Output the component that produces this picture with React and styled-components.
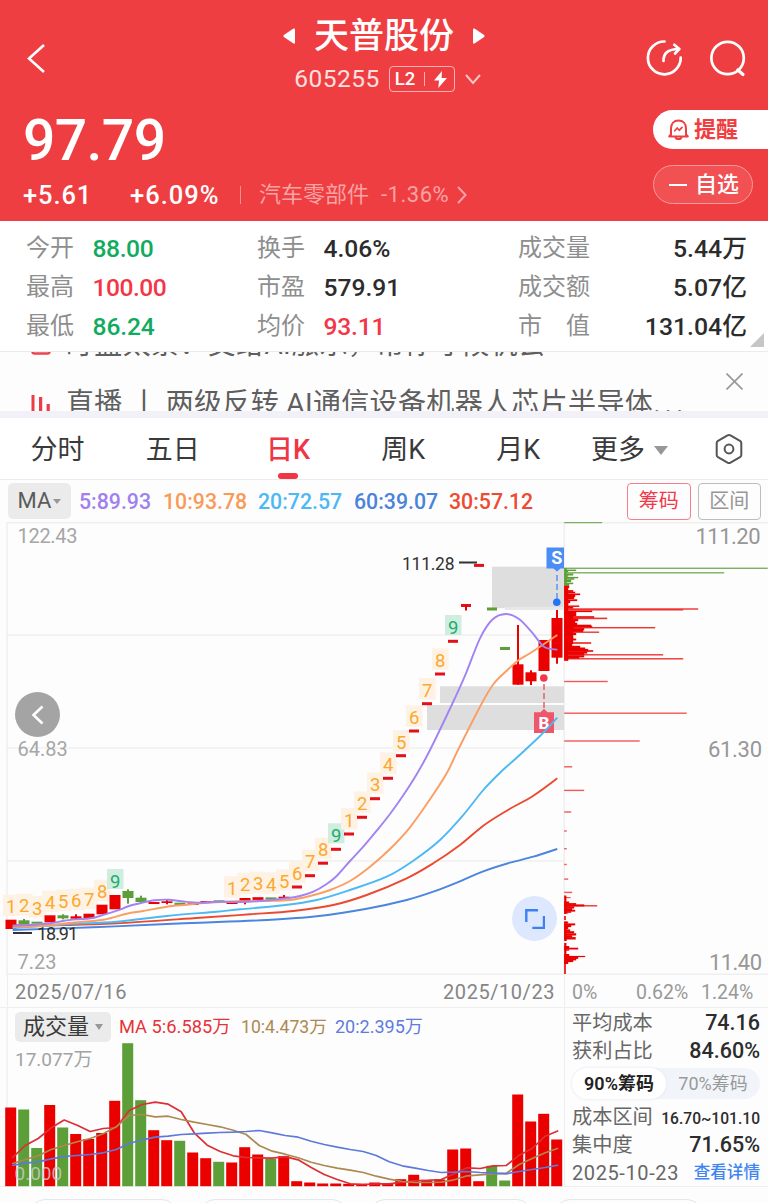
import React from "react";
import styled, { createGlobalStyle } from "styled-components";

const RED = "#ef3e41";
const UP = "#eb0000";
const DOWN = "#5c9e38";

const GlobalStyle = createGlobalStyle`
  * {
    box-sizing: border-box;
  }

  body {
    margin: 0;
    background: #fdfdfd;
    font-family: Roboto, "Noto Sans CJK SC", sans-serif;
  }

  svg {
    display: block;
  }
`;

const Container = styled.div`
  display: flex;
  flex-direction: column;
  width: 768px;
  height: 1203px;
  overflow: hidden;
  background: #fdfdfd;

  & > * {
    flex-shrink: 0;
  }
`;

/* ---------- header ---------- */

const Header = styled.header`
  height: 220.5px;
  background: ${RED};
  color: #fff;
`;

const TopBar = styled.div`
  display: grid;
  grid-template-columns: 130px 1fr 130px;
  height: 104px;
  padding-top: 12px;
`;

const BackSlot = styled.div`
  padding: 31px 0 0 26px;
`;

const TitleBlock = styled.div`
  display: flex;
  flex-direction: column;
  align-items: center;
`;

const TitleRow = styled.div`
  display: flex;
  align-items: center;
  gap: 19px;
  height: 48px;
`;

const StockName = styled.h1`
  margin: 0;
  padding-top: 2px;
  font-size: 35px;
  font-weight: 500;
  line-height: 48px;
`;

const CodeRow = styled.div`
  display: flex;
  align-items: center;
  height: 38px;
  padding-left: 7px;
  color: #fde0e0;
`;

const Code = styled.span`
  font-size: 24.5px;
  letter-spacing: 0.45px;
  line-height: 28px;
`;

const LevelBadge = styled.div`
  display: flex;
  align-items: center;
  justify-content: space-between;
  width: 66px;
  height: 26px;
  margin: 0 10px 0 9px;
  padding: 0 7px 0 5px;
  border: 1.5px solid #f9b3b4;
  border-radius: 4px;
  color: #fff;
  font-size: 18.5px;
  font-weight: 500;
`;

const BadgeSplit = styled.i`
  width: 1px;
  height: 14px;
  background: #f9b3b4;
`;

const IconGroup = styled.div`
  display: flex;
  gap: 24px;
  padding: 26px 0 0 6px;
`;

const QuoteBar = styled.div`
  display: flex;
  justify-content: space-between;
`;

const QuoteInfo = styled.div`
  display: flex;
  flex-direction: column;
  padding-left: 23px;
`;

const Price = styled.div`
  height: 73px;
  font-size: 57px;
  font-weight: 500;
  line-height: 73px;
  letter-spacing: -0.6px;
`;

const ChangeRow = styled.div`
  display: flex;
  align-items: center;
  height: 36px;
  font-size: 25.5px;
  font-weight: 500;
`;

const Change = styled.span`
  width: ${(p) => p.$w}px;
  letter-spacing: ${(p) => p.$ls || 0}px;
  white-space: nowrap;
`;

const Sector = styled.div`
  display: flex;
  align-items: center;
  gap: 12px;
  margin-left: 4px;
  padding-left: 18px;
  color: #f9a3a4;
  font-size: 22px;
  font-weight: 400;
  line-height: 18px;
  border-left: 1.5px solid #f58f91;

  svg {
    margin-left: -4px;
  }
`;

const SectorChange = styled.span`
  letter-spacing: 0.5px;
`;

const PillColumn = styled.div`
  display: flex;
  flex-direction: column;
  gap: 16px;
  width: 115px;
  padding-top: 6px;
`;

const RemindPill = styled.div`
  display: flex;
  align-items: center;
  gap: 5px;
  height: 39px;
  padding-left: 15px;
  border-radius: 20px 0 0 20px;
  background: #fff;
  color: ${RED};
  font-size: 22px;
  font-weight: 700;
`;

const WatchPill = styled.div`
  display: flex;
  align-items: center;
  gap: 8px;
  width: 100px;
  height: 39px;
  padding-left: 15px;
  border: 1.5px solid #f79a9b;
  border-radius: 20px;
  background: #f15153;
  font-size: 22px;
  font-weight: 500;
`;

const PillText = styled.span`
  padding-bottom: 5px;
`;

const Minus = styled.i`
  width: 18px;
  height: 2px;
  background: #fff;
`;

/* ---------- stats ---------- */

const Stats = styled.section`
  display: grid;
  grid-template-columns: 231px 261px 1fr;
  grid-auto-rows: 39px;
  position: relative;
  height: 131px;
  padding: 8px 21px 0 26px;
  border-bottom: 1px solid #ebebeb;
  background: #fff;
`;

const Stat = styled.div`
  display: flex;
  align-items: center;
  justify-content: ${(p) => (p.$spread ? "space-between" : "flex-start")};
`;

const StatLabel = styled.span`
  width: ${(p) => (p.$spread ? "auto" : "66.5px")};
  color: #8e8e8e;
  font-size: 24px;
  line-height: 39px;
  white-space: pre;
`;

const StatValue = styled.span`
  padding-top: ${(p) => (p.$spread ? 0 : 1)}px;
  color: ${(p) => p.$color || "#2c2c2c"};
  font-size: ${(p) => (p.$spread ? 24.8 : 24.6)}px;
  font-weight: 500;
  letter-spacing: ${(p) => p.$ls || 0}px;
  line-height: 39px;
`;

const Corner = styled.i`
  position: absolute;
  right: 4px;
  bottom: 4px;
  border-bottom: 14px solid #c6c6c6;
  border-left: 14px solid transparent;
`;

/* ---------- ticker ---------- */

const Ticker = styled.section`
  display: flex;
  justify-content: space-between;
  height: 59.5px;
  overflow: hidden;
`;

const TickerLines = styled.div`
  display: flex;
  flex-direction: column;
  margin-top: -27px;
`;

const TickerLine = styled.div`
  display: flex;
  align-items: center;
  height: 61px;
  flex-shrink: 0;
  padding-left: 31px;
  color: #5f5f5f;
  font-size: 28px;
  letter-spacing: 0.35px;
  line-height: 40px;
  white-space: pre;

  &:first-child {
    height: 41px;
    margin-bottom: 8px;
  }
`;

const TickerIcon = styled.span`
  width: 35px;
`;

const Dots = styled.span`
  letter-spacing: 4px;
`;

const CloseSlot = styled.div`
  padding: 21px 25px 0 0;
`;

const Band = styled.div`
  height: 7px;
  background: #f1f1f7;
`;

/* ---------- tabs ---------- */

const Tabs = styled.nav`
  display: flex;
  align-items: center;
  height: 62px;
  border-bottom: 1.5px solid #ececec;
  background: #fff;
`;

const Tab = styled.div`
  display: flex;
  flex-direction: column;
  align-items: center;
  width: 115.2px;
  height: 100%;
  color: ${(p) => (p.$active ? "#f03545" : "#3a3a3a")};
  font-size: 27px;
  font-weight: ${(p) => (p.$active ? 500 : 400)};
  line-height: 64px;

  &::after {
    content: "";
    width: 20px;
    height: 6px;
    margin-top: -9px;
    flex-shrink: 0;
    border-radius: 3px;
    background: ${(p) => (p.$active ? "#f03545" : "transparent")};
  }
`;

const MoreTab = styled.div`
  display: flex;
  align-items: center;
  gap: 9px;
  width: 138px;
  padding-left: 15px;
  color: #3a3a3a;
  font-size: 27px;
  line-height: 60px;
  padding-top: 3px;
`;

const Caret = styled.i`
  border-top: ${(p) => p.$size * 1.35}px solid #979797;
  border-right: ${(p) => p.$size}px solid transparent;
  border-left: ${(p) => p.$size}px solid transparent;
`;

/* ---------- indicator bar ---------- */

const MaBar = styled.div`
  display: flex;
  align-items: center;
  height: 42px;
  padding: 0 7px 0 8px;
`;

const Selector = styled.div`
  display: flex;
  align-items: center;
  justify-content: center;
  gap: ${(p) => p.$gap || 2}px;
  width: ${(p) => p.$w}px;
  height: ${(p) => p.$h}px;
  margin-right: 8px;
  border-radius: 5px;
  background: #ebebeb;
  color: ${(p) => p.$color || "#5b5b5b"};
  font-size: 22px;
  line-height: ${(p) => p.$h - 2}px;
`;

const MaValue = styled.span`
  width: ${(p) => p.$w}px;
  padding-top: 1px;
  color: ${(p) => p.$color};
  font-size: ${(p) => p.$size || 21.3}px;
  font-weight: ${(p) => p.$weight || 500};
  letter-spacing: ${(p) => p.$ls || 0}px;
  line-height: 30px;
  white-space: nowrap;
`;

const ModeButton = styled.div`
  width: 63.5px;
  height: 37px;
  margin-left: 7px;
  border: 1.5px solid ${(p) => (p.$active ? "#f5808c" : "#bdbdbd")};
  border-radius: 4px;
  color: ${(p) => (p.$active ? "#f03a4c" : "#969696")};
  font-size: 20px;
  line-height: 34px;
  text-align: center;
`;

const Spacer = styled.div`
  flex: 1;
`;

/* ---------- charts ---------- */

const ChartArea = styled.div`
  position: relative;
  height: 453px;
`;

const RoundButton = styled.div`
  display: flex;
  align-items: center;
  justify-content: center;
  position: absolute;
  left: ${(p) => p.$left}px;
  top: ${(p) => p.$top}px;
  width: 45px;
  height: 45px;
  border-radius: 50%;
  background: ${(p) => p.$bg};
`;

const DateRow = styled.div`
  display: flex;
  height: 32px;
  color: #858585;
  font-size: 20px;
  line-height: 35px;
`;

const DateRange = styled.div`
  display: flex;
  justify-content: space-between;
  width: 558px;
  margin-left: 7px;
  padding: 0 9px 0 7px;
  border-right: 1.5px solid #efefef;
  border-left: 1.5px solid #efefef;
  letter-spacing: 0.55px;
`;

const PercentAxis = styled.div`
  display: flex;
  width: 203px;
  padding-left: 7px;
  color: #999;
  font-size: 19.5px;
`;

const AxisLabel = styled.span`
  width: ${(p) => p.$w}px;
`;

const Bottom = styled.div`
  display: flex;
  height: 180px;
  border-top: 1.5px solid #efefef;
  border-bottom: 1.5px solid #efefef;
`;

const VolumePanel = styled.div`
  width: 565px;
  border-right: 1.5px solid #efefef;
`;

const VolumeHeader = styled.div`
  display: flex;
  align-items: center;
  height: 37px;
  padding-left: 15px;
`;

const ChipPanel = styled.div`
  display: flex;
  flex-direction: column;
  width: 203px;
  padding: 0 8px 0 7px;
`;

const InfoRow = styled.div`
  display: flex;
  align-items: center;
  justify-content: space-between;
  height: 28px;
  padding-top: 1px;
  color: #676767;
  font-size: ${(p) => p.$size || 20.2}px;
  letter-spacing: ${(p) => p.$ls || 0}px;
  line-height: 28px;
  white-space: nowrap;
`;

const InfoValue = styled.span`
  padding-top: ${(p) => (p.$small ? 4 : 1)}px;
  color: #2c2c2c;
  font-size: ${(p) => (p.$small ? 15.6 : 21.5)}px;
  font-weight: 500;
`;

const Detail = styled.span`
  color: #3f85f2;
  font-size: 16.6px;
  font-weight: 500;
  letter-spacing: 0;
`;

const Toggle = styled.div`
  display: flex;
  height: 31px;
  margin: 4px 0 3px;
  border-radius: 16px;
  background: #f1f5fa;
`;

const ToggleItem = styled.div`
  width: 94px;
  border-radius: 16px;
  background: ${(p) => (p.$active ? "#fff" : "transparent")};
  box-shadow: ${(p) => (p.$active ? "0 0 3px #dde3ee" : "none")};
  color: ${(p) => (p.$active ? "#222" : "#999")};
  font-size: 18px;
  font-weight: ${(p) => (p.$active ? 600 : 400)};
  line-height: 31px;
  text-align: center;
`;

const ChipRow = styled.div`
  display: flex;
  gap: 23px;
  padding: 12px 0 0 30px;
`;

const FooterChip = styled.div`
  flex: 0 0 ${(p) => p.$w || 147}px;
  height: 30px;
  border: 1.5px solid #e6e6e8;
  border-radius: 15px;
`;

/* ---------- data ---------- */

const stats = [
  { label: "今开", value: "88.00", color: "#11ab5f", ls: -0.4 },
  { label: "换手", value: "4.06%" },
  { label: "成交量", value: "5.44万", spread: true },
  { label: "最高", value: "100.00", color: "#f43648", ls: -0.5 },
  { label: "市盈", value: "579.91" },
  { label: "成交额", value: "5.07亿", spread: true },
  { label: "最低", value: "86.24", color: "#11ab5f", ls: -0.1 },
  { label: "均价", value: "93.11", color: "#f43648", ls: -0.2 },
  { label: "市\u3000值", value: "131.04亿", spread: true },
];

const maValues = [
  { text: "5:89.93", color: "#a080ee", w: 84 },
  { text: "10:93.78", color: "#f99a57", w: 95 },
  { text: "20:72.57", color: "#4db8f6", w: 96 },
  { text: "60:39.07", color: "#4a82dc", w: 95 },
  { text: "30:57.12", color: "#ee4a30", w: 90 },
];

// [index, top, bottom, direction, wickTop, wickBottom]
const candles = [
  [0, 919.7, 929, 1],
  [1, 920.3, 924, 0, 919, 924],
  [2, 921.7, 923.7, 0],
  [3, 915.3, 922.3, 1],
  [4, 915.3, 918.3, 0, 914.3, 919.3],
  [5, 916.3, 918.7, 1, 914.3, 919.3],
  [6, 913.7, 918.3, 1],
  [7, 904.7, 914.3, 1],
  [8, 895, 909.3, 1],
  [9, 891, 898, 0, 889.3, 903.7],
  [10, 897.7, 902, 0, 895.7, 902],
  [11, 902, 904, 1],
  [12, 901.3, 903, 1, 900, 904.3],
  [13, 902.7, 905.3, 0],
  [14, 903.3, 905, 1],
  [15, 901, 902.7, 1],
  [16, 900.3, 902, 0],
  [17, 902.3, 904, 1],
  [18, 898, 901.5, 1, 898, 904.3],
  [19, 897.2, 899.9, 1],
  [20, 897.4, 899.6, 0],
  [21, 896.7, 898.3, 1, 895, 899],
  [39, 664.3, 684.7, 1, 625, 684.7],
  [40, 672.3, 681.3, 1, 670.3, 685],
  [41, 640, 671, 1],
  [42, 618, 657.7, 1, 610, 663.7],
];

// one-price days: [index, y, direction]
const dashes = [
  [22, 887, 1], [23, 875.7, 1], [24, 863.2, 1], [25, 849.3, 1],
  [26, 834, 1], [27, 817.3, 1], [28, 798.7, 1], [29, 778.3, 1],
  [30, 755.7, 1], [31, 731, 1], [32, 703.7, 1], [33, 674, 1],
  [34, 641.3, 1], [35, 605.5, 1], [36, 565.4, 1], [37, 609, 0],
  [38, 648.5, 0],
];

// [index, number, y of its centre]
const counts = [
  [0, 1, 906.7], [1, 2, 905.7], [2, 3, 908], [3, 4, 902.7], [4, 5, 901.5],
  [5, 6, 900.7], [6, 7, 899.7], [7, 8, 891.7], [8, 9, 881],
  [17, 1, 888.2], [18, 2, 884.7], [19, 3, 883.7], [20, 4, 884.2],
  [21, 5, 881.3], [22, 6, 873.7], [23, 7, 861.7], [24, 8, 849.7],
  [25, 9, 835.3], [26, 1, 820], [27, 2, 803.3], [28, 3, 784.3],
  [29, 4, 764.3], [30, 5, 742], [31, 6, 717.3], [32, 7, 690],
  [33, 8, 660.3], [34, 9, 627],
];

const maLines = [
  {
    color: "#4a86dd",
    points: [[12.7, 930], [93, 927.3], [167, 924], [200, 922.7], [266.7, 920], [316.7, 916.3], [366.7, 908.7], [406.7, 900], [433.3, 891.7], [460, 881.3], [483.3, 871.3], [510, 862.7], [533.3, 856.7], [557.3, 849]],
  },
  {
    color: "#ea4a30",
    points: [[12.7, 925.3], [66.7, 925], [116.7, 923.3], [200, 917.7], [250, 914.3], [293.3, 911], [333.3, 905], [366.7, 895], [406.7, 878.3], [433.3, 863.3], [460, 845], [483.3, 825.7], [506.7, 810.7], [533.3, 795.7], [557.3, 778.3]],
  },
  {
    color: "#4cb9f5",
    points: [[12.7, 928], [66.7, 924.3], [116.7, 921.7], [166.7, 916], [216.7, 911.7], [240, 909.3], [283.3, 905.3], [316.7, 900], [350, 890], [386.7, 876.7], [413.3, 860.7], [440, 840], [463.3, 815], [483.3, 790], [500, 772.7], [516.7, 757.7], [540, 736], [557.3, 717.7]],
  },
  {
    color: "#fa9e62",
    points: [[12.7, 927], [40, 926], [66.7, 923.3], [103.3, 919.7], [126.7, 913.7], [143.3, 911], [166.7, 906.7], [186.7, 904.7], [206.7, 902.7], [240, 901.3], [266.7, 901], [290, 900], [310, 896], [330, 890], [350, 881], [370, 866.7], [390, 849], [410, 827.3], [430, 799.3], [446.7, 773.3], [458, 750], [480, 706.7], [493.3, 684.3], [506.7, 670.7], [518.7, 660], [530, 653.3], [544, 644], [557.3, 635]],
  },
  {
    color: "#a183f3",
    points: [[12.7, 926], [38, 924.3], [52, 923], [64, 920.7], [77, 919.3], [90.7, 918.3], [104, 914.7], [117, 910.7], [129, 906], [142, 902.7], [155, 900.3], [168.7, 899.7], [181.7, 901.3], [200, 902.7], [220, 901.7], [240, 902], [260, 901], [286.7, 898.3], [300, 896], [313.3, 891.7], [326.7, 884], [336.7, 876], [350, 861], [363.3, 846.7], [376.7, 830.7], [390, 814], [403.3, 795.3], [416.7, 774.3], [430, 750], [451.7, 705], [466, 673.3], [480, 638.3], [492.7, 619.3], [506, 614], [518.7, 618.7], [532, 632.3], [544, 646.7], [557.3, 649.7]],
  },
];

// chip distribution: [y, length, thickness]
const chipGreen = [
  [522.5, 38, 1.4], [568.3, 203.5, 1.4], [570.3, 12, 1.4], [571.5, 4, 1.4],
  [572.8, 160, 1.4], [574.5, 9, 2], [576, 4, 1.5], [577.6, 14, 1.4],
  [579, 10, 1.6], [581, 7, 2], [583.4, 9, 1.6], [585, 5, 2],
];

const chipRed = [
  [587, 5, 2.4], [589, 3, 2], [591, 9, 1.8], [592.5, 11, 1.6], [594.3, 16, 1.6],
  [596, 11, 2], [598, 10, 2], [600.2, 13, 1.8], [602, 6, 2.2], [604, 4, 2],
  [606.2, 15, 1.4], [607.7, 9, 1.8], [609, 134, 1.4], [609.9, 119, 1.2],
  [611.3, 28, 1.6], [613, 12, 2.4], [615, 12, 2.4], [617, 30, 1.6], [618.4, 43, 1.6],
  [620, 14, 2.4], [622, 11, 2.4], [624, 13, 2.4], [625.6, 27, 1.8], [626.6, 28, 1.6],
  [627.7, 91, 1.4], [629.2, 20, 2.2], [630.8, 19, 2.2], [632.2, 35, 1.4],
  [634, 12, 2.4], [636, 8, 2.4], [638, 9, 2.4], [639.5, 12, 1.8], [641, 8, 2.4],
  [643, 27, 1.4], [645, 8, 3], [647, 16, 2.4], [648.6, 21, 2.2], [650, 24, 2.2],
  [651, 29, 1.6], [652.5, 23, 2.2], [653.8, 20, 2], [654.8, 99, 1.4],
  [656.3, 20, 2.2], [657.6, 15, 2], [658.8, 119, 1.4], [660, 4, 1.4],
  [681.5, 43.5, 1.4], [713.2, 122.5, 1.4], [741, 75.5, 1.4], [766.8, 8, 1.4],
  [790.4, 20, 1.4], [812, 7, 1.4], [831, 2.5, 1.4], [848.7, 2.5, 1.4],
  [864.5, 2.5, 1.4], [879.1, 4, 1.4], [892.4, 8, 1.4], [897.6, 6.5, 1.2],
  [902.5, 5, 2], [904, 12, 1.8], [905.4, 20, 2], [905.8, 33, 1.4],
  [907.4, 10, 2.2], [909.3, 8, 2.2], [910.7, 11, 1.8], [912, 7, 1.6], [913, 4, 1],
  [922.5, 4, 1.8], [924.4, 11, 2], [926, 7, 2.2], [928, 4, 2], [930.5, 6, 2.2],
  [932.3, 10, 2.2], [934.4, 12, 2.2], [936.3, 8, 2.2], [938.3, 11.5, 2.4],
  [947, 5, 2], [948.6, 14, 1.8], [950, 5, 1.4], [955, 5, 2], [956.5, 21, 1.2],
  [957.8, 14, 2.2], [959.3, 12, 2.2], [961, 9, 2.2], [963, 4, 2],
];

const volumes = [
  [1108, 1], [1110, 0], [1148.5, 0], [1105.5, 1], [1128, 0], [1134.5, 1],
  [1139.5, 1], [1133.5, 1], [1101.3, 1], [1043.7, 0], [1100.7, 0], [1130.7, 1],
  [1140.7, 1], [1141.3, 0], [1153, 1], [1158.7, 1], [1162.3, 0], [1163, 1],
  [1147.7, 1], [1155, 1], [1159.5, 0], [1156.7, 1], [1181.7, 1], [1183, 1],
  [1184, 1], [1184, 1], [1184.3, 1], [1184.3, 1], [1183, 1], [1184.3, 1],
  [1179.7, 1], [1175.3, 1], [1180.3, 1], [1180, 1], [1150, 1], [1149, 1],
  [1181.7, 1], [1166.3, 0], [1181, 0], [1095, 1], [1122, 1], [1114.3, 1],
  [1140, 1],
];

const volumeMa = [
  {
    color: "#dc2f35",
    values: [158.3, 146, 139, 128.3, 120.5, 125.7, 132, 129, 128, 111, 105, 102.7, 104.7, 112.3, 133.3, 145.7, 152, 156.3, 158, 158.3, 158.7, 157.2, 160.3, 168, 175, 180, 184.3, 185, 184.3, 184.3, 182.7, 181.3, 180.8, 180, 174.3, 168.3, 169, 166.3, 166, 155.7, 149, 136.7, 131.3],
  },
  {
    color: "#ad8850",
    values: [164.3, 160, 156.3, 150, 146, 142.3, 139, 134.3, 127.3, 116, 115, 117.3, 116.7, 120, 122.7, 125, 127.3, 130.7, 135, 146, 151.7, 154.7, 158.3, 162.7, 166, 168.7, 170.7, 173, 176.7, 179.7, 182, 183, 183, 182.7, 180.3, 176.3, 175.3, 174.3, 173.7, 165, 159, 153.3, 148.7],
  },
  {
    color: "#5f79da",
    values: [166, 163.7, 162.3, 159.3, 157, 156, 155, 153.3, 150, 144, 140.3, 137.7, 136.7, 135, 134.3, 133.7, 133, 132.7, 132, 131, 133.3, 136, 137.7, 141.7, 145, 147.7, 150, 152, 156, 162.3, 166.3, 168.7, 171, 173, 172.7, 172, 173, 173.7, 174.3, 172, 170, 168, 165.7],
  },
];

const xAt = (i) => 11 + i * 13;

// Catmull-Rom spline through all the points
const smoothPath = (pts) => {
  let d = `M${pts[0][0]} ${pts[0][1]}`;
  for (let i = 0; i < pts.length - 1; i++) {
    const p0 = pts[i - 1] || pts[i];
    const p1 = pts[i];
    const p2 = pts[i + 1];
    const p3 = pts[i + 2] || p2;
    d += ` C${p1[0] + (p2[0] - p0[0]) / 6} ${p1[1] + (p2[1] - p0[1]) / 6}`;
    d += ` ${p2[0] - (p3[0] - p1[0]) / 6} ${p2[1] - (p3[1] - p1[1]) / 6}`;
    d += ` ${p2[0]} ${p2[1]}`;
  }
  return d;
};

const KLineChart = () => (
  <svg width="768" height="453" viewBox="0 522 768 453">
    <g stroke="#efefef" strokeWidth="1.5">
      <path d="M7 522.7H768M7 635H564M7 748H564M7 861H564M7 974.3H768" />
      <path d="M7 522V975M564.2 522V975" />
    </g>

    <g fill="#dedede">
      <rect x="492" y="566.7" width="72" height="41.5" />
      <rect x="505" y="607" width="59" height="3" fill="#e8e8e8" />
      <rect x="440" y="686.3" width="124" height="16.7" />
      <rect x="427" y="705" width="137" height="25" />
    </g>

    <g fontSize="20" fill="#a6a6a6">
      <text x="17.5" y="543" textLength="60">122.43</text>
      <text x="17.5" y="756">64.83</text>
      <text x="17.5" y="969">7.23</text>
    </g>
    <g fontSize="22" fill="#979797" textAnchor="end">
      <text x="760.5" y="544" textLength="65">111.20</text>
      <text x="762" y="756.7" textLength="54">61.30</text>
      <text x="762" y="970" textLength="53">11.40</text>
    </g>

    {counts.map(([i, n, y]) => (
      <g key={i}>
        <rect
          x={xAt(i) - 8}
          y={y - 12}
          width="16.5"
          height={n === 9 ? 20 : 21.5}
          fill={n === 9 ? "#cfeee0" : "#fef2e4"}
        />
        <text
          x={xAt(i) + 0.3}
          y={y + 6.7}
          fontSize="18.5"
          textAnchor="middle"
          fill={n === 9 ? "#22ad6c" : "#fba92e"}
        >
          {n}
        </text>
      </g>
    ))}

    {candles.map(([i, top, bottom, up, wickTop, wickBottom]) => (
      <g key={i} fill={up ? UP : DOWN}>
        <rect x={xAt(i) - 5.5} y={top} width="11" height={bottom - top} />
        {wickTop && (
          <rect x={xAt(i) - 1} y={wickTop} width="2" height={wickBottom - wickTop} />
        )}
      </g>
    ))}

    {dashes.map(([i, y, up]) => (
      <rect
        key={i}
        x={xAt(i) - 5}
        y={y - 1.5}
        width="10"
        height="3"
        fill={up ? "#e3101a" : DOWN}
      />
    ))}
    <rect x="465" y="605" width="2" height="5.5" fill={UP} />

    <path d="M544 684V708" stroke="#ee5a68" strokeWidth="1.5" strokeDasharray="6 3" />
    <circle cx="543.8" cy="678" r="3.8" fill="#ee3a4a" />
    <path d="M534 712.3H540.5L544 708.8L547.5 712.3H554V733H534Z" fill="#f0566a" />
    <text x="544" y="728.5" fontSize="17" fontWeight="800" fill="#fff" textAnchor="middle">
      B
    </text>

    {maLines.map((line) => (
      <path
        key={line.color}
        d={smoothPath(line.points)}
        fill="none"
        stroke={line.color}
        strokeWidth="1.9"
      />
    ))}

    <path d="M557 575V599" stroke="#5a94f5" strokeWidth="1.5" strokeDasharray="6 3" />
    <circle cx="556.8" cy="602.3" r="3.8" fill="#2274fb" />
    <path d="M546.5 547.5H564V568.5H560.5L557 571.5L553.5 568.5H546.5Z" fill="#4a8df6" />
    <text x="556.8" y="564.3" fontSize="18" fontWeight="700" fill="#fff" textAnchor="middle">
      S
    </text>

    <g fontSize="17.5" fill="#333">
      <text x="402" y="570" textLength="52.5">111.28</text>
      <text x="37" y="940" fontSize="18" textLength="41">18.91</text>
      <path d="M459 562.6H477M13 933H32" stroke="#333" strokeWidth="2" />
    </g>

    <g fill={DOWN}>
      {chipGreen.map(([y, len, h]) => (
        <rect key={y} x="564.2" y={y - h / 2} width={len} height={h} opacity={len > 30 ? 0.8 : 1} />
      ))}
      <rect x="564.2" y="568" width="2.5" height="18" />
    </g>
    <g fill={UP}>
      {chipRed.map(([y, len, h]) => (
        <rect key={y} x="564.2" y={y - h / 2} width={len} height={h} opacity={y > 660 && y < 900 ? 0.65 : len > 30 ? 0.8 : 1} />
      ))}
      <path d="M564.2 586h4v74.5h-4zM564.2 611h9v33h-9zM564.2 895.5h2.2v18.5h-2.2zM564.2 916h1.6v4h-1.6zM564.2 921.5h2.5v19.5h-2.5zM564.2 943h2.2v20h-2.2zM564.2 963h1.6v11h-1.6z" />
    </g>
  </svg>
);

const VolumeChart = () => (
  <svg width="564" height="142" viewBox="0 1045.5 564 142" overflow="visible">
    <path d="M7 1008V1187" stroke="#efefef" strokeWidth="1.5" />
    <text x="15" y="1066" fontSize="19" fill="#a3a3a3">
      17.077万
    </text>
    {volumes.map(([top, up], i) => (
      <rect
        key={i}
        x={xAt(i) - 5.8}
        y={top}
        width="11"
        height={1186.7 - top}
        fill={up ? UP : DOWN}
      />
    ))}
    <text x="14.5" y="1180" fontSize="19" fill="#c9c9c9" fillOpacity="0.85">
      0.000
    </text>
    {volumeMa.map((line) => (
      <polyline
        key={line.color}
        points={line.values.map((v, i) => `${xAt(i) + 1.2},${v + 1000}`).join(" ")}
        fill="none"
        stroke={line.color}
        strokeWidth="1.7"
        strokeLinejoin="round"
      />
    ))}
  </svg>
);

const App = () => {
  return (
    <>
      <GlobalStyle />
      <Container>
        <Header>
          <TopBar>
            <BackSlot>
              <svg width="20" height="32" viewBox="0 0 20 32" fill="none" stroke="#fff" strokeWidth="2.6">
                <path d="M18 2L3 15.5L18 29" />
              </svg>
            </BackSlot>
            <TitleBlock>
              <TitleRow>
                <svg width="12" height="16" viewBox="0 0 12 16" fill="#fff">
                  <path d="M10.5 0.5Q12 0 12 1.5V14.5Q12 16 10.5 15.5L0.8 9Q0 8 0.8 7Z" />
                </svg>
                <StockName>天普股份</StockName>
                <svg width="12" height="16" viewBox="0 0 12 16" fill="#fff">
                  <path d="M1.5 0.5Q0 0 0 1.5V14.5Q0 16 1.5 15.5L11.2 9Q12 8 11.2 7Z" />
                </svg>
              </TitleRow>
              <CodeRow>
                <Code>605255</Code>
                <LevelBadge>
                  L2
                  <BadgeSplit />
                  <svg width="13" height="17" viewBox="0 0 13 17" fill="#fff">
                    <path d="M8 0L0 9.5H5L4.3 17L13 7H7.6Z" />
                  </svg>
                </LevelBadge>
                <svg width="16" height="11" viewBox="0 0 16 11" fill="none" stroke="#fbc5c6" strokeWidth="2">
                  <path d="M1 1L8 9L15 1" />
                </svg>
              </CodeRow>
            </TitleBlock>
            <IconGroup>
              <svg width="40" height="40" viewBox="644 38 40 40" fill="none" stroke="#fff" strokeWidth="2.7" strokeLinecap="round" strokeLinejoin="round">
                <path d="M664.5 41.5A16.4 16.4 0 1 0 680.7 57.5" />
                <path d="M663.5 61C663.5 53 667.5 49.3 679 49" />
                <path d="M674.3 44.8L679.3 49L675 53.5" />
              </svg>
              <svg width="40" height="40" viewBox="708 38 40 40" fill="none" stroke="#fff" strokeWidth="2.7" strokeLinecap="round">
                <circle cx="727.6" cy="58" r="16.2" />
                <path d="M737.8 70L743 74.5" strokeWidth="3.2" />
              </svg>
            </IconGroup>
          </TopBar>
          <QuoteBar>
            <QuoteInfo>
              <Price>97.79</Price>
              <ChangeRow>
                <Change $w={107} $ls={0.9}>+5.61</Change>
                <Change $w={106} $ls={1}>+6.09%</Change>
                <Sector>
                  <span>汽车零部件</span>
                  <SectorChange>-1.36%</SectorChange>
                  <svg width="10" height="18" viewBox="0 0 10 18" fill="none" stroke="#f9a3a4" strokeWidth="2">
                    <path d="M1 1L8.5 9L1 17" />
                  </svg>
                </Sector>
              </ChangeRow>
            </QuoteInfo>
            <PillColumn>
              <RemindPill>
                <svg width="21" height="22" viewBox="0 0 21 22" fill="none" stroke={RED} strokeWidth="2" strokeLinejoin="round" strokeLinecap="round">
                  <path d="M3 16V9.5C3 4.5 6 1.5 10.5 1.5S18 4.5 18 9.5V16" />
                  <path d="M1.3 17.3L3 15.5M19.7 17.3L18 15.5M1.3 17.5H19.7" />
                  <path d="M7.5 18C8 20.8 13 20.8 13.5 18" />
                  <path d="M6.8 11.8L9.2 9L11.2 11.3L14 8.3" strokeWidth="1.7" />
                </svg>
                <PillText>提醒</PillText>
              </RemindPill>
              <WatchPill>
                <Minus />
                <PillText>自选</PillText>
              </WatchPill>
            </PillColumn>
          </QuoteBar>
        </Header>

        <Stats>
          {stats.map((s) => (
            <Stat key={s.label} $spread={s.spread}>
              <StatLabel $spread={s.spread}>{s.label}</StatLabel>
              <StatValue $spread={s.spread} $color={s.color} $ls={s.ls}>
                {s.value}
              </StatValue>
            </Stat>
          ))}
          <Corner />
        </Stats>

        <Ticker>
          <TickerLines>
            <TickerLine>
              <TickerIcon>
                <svg width="20" height="20" viewBox="0 0 20 20" fill="none" stroke="#ee4450" strokeWidth="2.5">
                  <rect x="1.5" y="1.5" width="17" height="17" rx="2" />
                </svg>
              </TickerIcon>
              盯盘太累：交给AI涨乐，帮你守候机会
            </TickerLine>
            <TickerLine>
              <TickerIcon>
                <svg width="20" height="18" viewBox="0 0 20 18" fill="#ee3b48">
                  <rect x="0.5" y="0" width="3" height="18" />
                  <rect x="8" y="2" width="3.2" height="16" />
                  <rect x="15.6" y="9" width="3.2" height="9" />
                </svg>
              </TickerIcon>
              直播 丨 两级反转 AI通信设备机器人芯片半导体<Dots>...</Dots>
            </TickerLine>
          </TickerLines>
          <CloseSlot>
            <svg width="17" height="17" viewBox="0 0 17 17" stroke="#999" strokeWidth="1.7">
              <path d="M0.5 0.5L16.5 16.5M16.5 0.5L0.5 16.5" />
            </svg>
          </CloseSlot>
        </Ticker>
        <Band />

        <Tabs>
          <Tab>分时</Tab>
          <Tab>五日</Tab>
          <Tab $active>日K</Tab>
          <Tab>周K</Tab>
          <Tab>月K</Tab>
          <MoreTab>
            更多
            <Caret $size={7} />
          </MoreTab>
          <svg width="30" height="32" viewBox="0 0 30 32" fill="none" stroke="#555" strokeWidth="2" strokeLinejoin="round">
            <path d="M13.5 2.4Q15 1.6 16.5 2.4L26 7.8Q27.3 8.6 27.3 10V22Q27.3 23.4 26 24.2L16.5 29.6Q15 30.4 13.5 29.6L4 24.2Q2.7 23.4 2.7 22V10Q2.7 8.6 4 7.8Z" />
            <circle cx="15" cy="16" r="4.4" />
          </svg>
        </Tabs>

        <MaBar>
          <Selector $w={63} $h={36}>
            MA
            <Caret $size={4.2} />
          </Selector>
          {maValues.map((m) => (
            <MaValue key={m.text} $color={m.color} $w={m.w}>
              {m.text}
            </MaValue>
          ))}
          <Spacer />
          <ModeButton $active>筹码</ModeButton>
          <ModeButton>区间</ModeButton>
        </MaBar>

        <ChartArea>
          <KLineChart />
          <RoundButton $left={15} $top={170} $bg="#a4a4a4">
            <svg width="14" height="20" viewBox="0 0 14 20" fill="none" stroke="#fff" strokeWidth="2.6">
              <path d="M11.5 1.5L2.5 10L11.5 18.5" />
            </svg>
          </RoundButton>
          <RoundButton $left={512} $top={374} $bg="#dde8fe">
            <svg width="20" height="20" viewBox="0 0 20 20" fill="none" stroke="#3d80f3" strokeWidth="2.4">
              <path d="M1.3 13V1.3H13M19 7V19H7.3" />
            </svg>
          </RoundButton>
        </ChartArea>

        <DateRow>
          <DateRange>
            <span>2025/07/16</span>
            <span>2025/10/23</span>
          </DateRange>
          <PercentAxis>
            <AxisLabel $w={64}>0%</AxisLabel>
            <AxisLabel $w={65}>0.62%</AxisLabel>
            <AxisLabel $w={60}>1.24%</AxisLabel>
          </PercentAxis>
        </DateRow>

        <Bottom>
          <VolumePanel>
            <VolumeHeader>
              <Selector $w={96} $h={30} $gap={6} $color="#3a3a3a">
                成交量
                <Caret $size={4.5} />
              </Selector>
              <MaValue $color="#e5333a" $w={122} $size={18.3} $weight={400}>MA 5:6.585万</MaValue>
              <MaValue $color="#ad8850" $w={94} $size={17.6} $weight={400}>10:4.473万</MaValue>
              <MaValue $color="#5f7be0" $w={100} $size={18} $weight={400}>20:2.395万</MaValue>
            </VolumeHeader>
            <VolumeChart />
          </VolumePanel>
          <ChipPanel>
            <InfoRow>
              平均成本 <InfoValue>74.16</InfoValue>
            </InfoRow>
            <InfoRow>
              获利占比 <InfoValue>84.60%</InfoValue>
            </InfoRow>
            <Toggle>
              <ToggleItem $active>90%筹码</ToggleItem>
              <ToggleItem>70%筹码</ToggleItem>
            </Toggle>
            <InfoRow>
              成本区间 <InfoValue $small>16.70~101.10</InfoValue>
            </InfoRow>
            <InfoRow>
              集中度 <InfoValue>71.65%</InfoValue>
            </InfoRow>
            <InfoRow $size={20} $ls={0.6}>
              2025-10-23 <Detail>查看详情</Detail>
            </InfoRow>
          </ChipPanel>
        </Bottom>

        <ChipRow>
          <FooterChip />
          <FooterChip />
          <FooterChip $w={162} />
          <FooterChip />
        </ChipRow>
      </Container>
    </>
  );
};

export default App;
